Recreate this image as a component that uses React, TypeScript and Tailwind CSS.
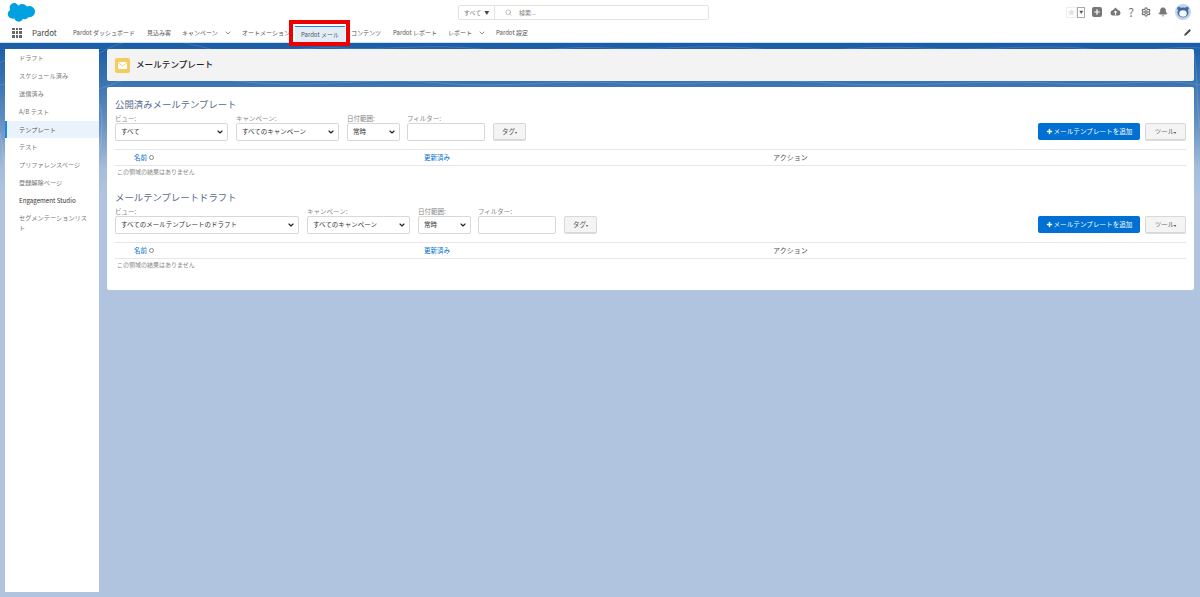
import { ChevronDown, Search, Star, Plus, Settings, Bell, Pencil } from "lucide-react";

const FONT = "[font-family:'Noto_Sans_CJK_JP','Liberation_Sans',sans-serif]";

const NAV_ITEMS = [
    { label: "Pardot ダッシュボード", width: "w-[74px]" },
    { label: "見込み客", width: "w-[35px]" },
    { label: "キャンペーン", width: "w-[60px]", chevron: true },
    { label: "オートメーション", width: "w-[53px]" },
];

const SIDE_ITEMS = [
    "ドラフト",
    "スケジュール済み",
    "送信済み",
    "A/B テスト",
    "テンプレート",
    "テスト",
    "プリファレンスページ",
    "登録解除ページ",
    "Engagement Studio",
    "セグメンテーションリスト",
];

function SalesforceLogo() {
    return (
        <svg width="28" height="20" viewBox="0 0 28 20">
            <path
                fill="#00a1e0"
                d="M11.300 2.800C12.300 1.600 13.700 1 15.200 1c2 0 3.700 1 4.600 2.600.8-.4 1.700-.6 2.600-.6 3.100 0 5.600 2.500 5.600 5.600s-2.500 5.700-5.600 5.700c-.4 0-.7 0-1.100-.1-.7 1.200-2 2-3.500 2-.6 0-1.200-.1-1.800-.4-.7 1.700-2.400 2.900-4.300 2.900-2 0-3.800-1.300-4.400-3.100-.3.100-.6.100-.9.100C3 15.700.8 13.600.8 11c0-1.700.9-3.300 2.300-4.100-.3-.7-.4-1.400-.4-2.200C2.700 2.100 4.900 0 7.600 0c1.500 0 2.800 1.100 3.700 2.800z"
            />
        </svg>
    );
}

function Avatar() {
    return (
        <svg width="16" height="16" viewBox="0 0 32 32">
            <circle cx="16" cy="16" r="16" fill="#c3d2e6" />
            <circle cx="8" cy="9" r="3.500" fill="#3f6aa3" />
            <circle cx="24" cy="9" r="3.500" fill="#3f6aa3" />
            <ellipse cx="16" cy="17" rx="11" ry="10" fill="#3f6aa3" />
            <ellipse cx="16" cy="19" rx="7.500" ry="6.500" fill="#f4f6fa" />
        </svg>
    );
}

function Select({ text, width }: { text: string; width: string }) {
    return (
        <div className={`flex h-[18px] items-center justify-between rounded-[2px] border border-[#d8d8d8] bg-white pl-[5px] pr-[3px] text-[6.500px] text-[#333333] ${width}`}>
            <span className="whitespace-nowrap">{text}</span>
            <ChevronDown size={8} strokeWidth={3.500} className="text-[#222222]" />
        </div>
    );
}

function Field({ label, children }: { label: string; children: React.ReactNode }) {
    return (
        <div className="flex flex-col">
            <span className="h-[9px] text-[6.500px] leading-[9px] text-[#888888]">{label}</span>
            {children}
        </div>
    );
}

function Section({ title, view, viewWidth }: { title: string; view: string; viewWidth: string }) {
    return (
        <section>
            <h2 className="h-[14px] text-[9.400px] leading-[14px] text-[#54698d]">{title}</h2>
            <div className="mt-[3px] flex items-end">
                <Field label="ビュー:">
                    <Select text={view} width={viewWidth} />
                </Field>
                <div className="ml-[8px]">
                    <Field label="キャンペーン:">
                        <Select text="すべてのキャンペーン" width="w-[103px]" />
                    </Field>
                </div>
                <div className="ml-[8px]">
                    <Field label="日付範囲:">
                        <Select text="常時" width="w-[53px]" />
                    </Field>
                </div>
                <div className="ml-[7px]">
                    <Field label="フィルター:">
                        <div className="h-[18px] w-[78px] rounded-[2px] border border-[#d8d8d8] bg-white" />
                    </Field>
                </div>
                <button className="mb-[1px] ml-[8px] flex h-[17px] w-[33px] items-center justify-center rounded-[2px] border border-[#d8d8d8] bg-[#f4f4f4] text-[6.500px] text-[#555555] shadow-[0_1px_0_#dddddd]">
                    タグ<span className="text-[4px]">▾</span>
                </button>
                <button className="mb-[1px] ml-auto flex h-[17px] w-[102px] items-center justify-center gap-[1px] rounded-[2px] bg-[#0070d2] text-[6.600px] text-white">
                    <Plus size={7} strokeWidth={5} />
                    メールテンプレートを追加
                </button>
                <button className="mb-[1px] ml-[5px] flex h-[17px] w-[41px] items-center justify-center rounded-[2px] border border-[#d8d8d8] bg-[#f4f4f4] text-[6.500px] text-[#666666] shadow-[0_1px_0_#dddddd]">
                    ツール<span className="text-[4px] text-[#333333]">▾</span>
                </button>
            </div>
            <div className="mt-[8px] flex h-[17px] items-center border-y border-[#e6e6e6] text-[6.500px]">
                <span className="ml-[19px] flex w-[290px] items-center gap-[2px] text-[#0070d2]">
                    名前
                    <span className="h-[5px] w-[5px] rounded-full border-[1.500px] border-[#888888]" />
                </span>
                <span className="w-[349px] text-[#0070d2]">更新済み</span>
                <span className="text-[7px] text-[#555555]">アクション</span>
            </div>
            <p className="ml-[2px] mt-[1px] text-[6px] leading-[10px] text-[#888888]">この領域の結果はありません</p>
        </section>
    );
}

export default function App() {
    return (
        <div className={`flex h-[597px] w-[1200px] flex-col overflow-hidden bg-white ${FONT}`}>
            <header className="relative z-10 h-[42px] shrink-0 bg-white">
                <div className="flex h-[22px] items-center">
                    <div className="ml-[7px] mt-[3px] w-[28px]">
                        <SalesforceLogo />
                    </div>
                    <div className="ml-[423px] mt-[2px] flex h-[15px] w-[251px] items-center rounded-[2px] border border-[#e2e2e2] text-[6px] text-[#777777]">
                        <span className="flex h-full w-[36px] items-center justify-center gap-[3px] border-r border-[#e2e2e2]">
                            すべて
                            <span className="text-[5px] text-[#444444]">▼</span>
                        </span>
                        <Search size={7} className="ml-[10px] text-[#999999]" />
                        <span className="ml-[7px]">検索...</span>
                    </div>
                    <div className="ml-auto mr-[9px] mt-[2px] flex items-center text-[#777777]">
                        <span className="flex h-[11px] w-[11px] items-center justify-center border border-[#eeeeee]">
                            <Star size={7} fill="#e3e3e3" stroke="#e3e3e3" />
                        </span>
                        <span className="flex h-[11px] w-[8px] items-center justify-center border border-[#aaaaaa] text-[4px] text-[#555555]">▼</span>
                        <span className="ml-[7px] flex h-[10px] w-[10px] items-center justify-center rounded-[2px] bg-[#777777]">
                            <Plus size={8} strokeWidth={3.500} className="text-white" />
                        </span>
                        <svg className="ml-[8px]" width="11" height="10" viewBox="0 0 22 20">
                            <path fill="#777777" d="M11 1 16 6a6 6 0 0 1 5 6 5 5 0 0 1-4 5H5a5 5 0 0 1-4-5 6 6 0 0 1 5-6z" />
                            <path fill="#ffffff" d="M11 7l4 4h-3v5h-2v-5H7z" />
                        </svg>
                        <span className="ml-[7px] text-[12px] leading-[12px] text-[#777777]">?</span>
                        <Settings size={10} strokeWidth={3} className="ml-[7px]" />
                        <Bell size={10} fill="#777777" className="ml-[7px]" />
                        <span className="ml-[7px]">
                            <Avatar />
                        </span>
                    </div>
                </div>
                <nav className="flex h-[20px] items-center pt-[1px] text-[6px] text-[#555555]">
                    <span className="ml-[12px] grid h-[10px] w-[10px] grid-cols-3 gap-[1px]">
                        {Array.from({ length: 9 }).map((_, i) => (
                            <span key={i} className="bg-[#666666]" />
                        ))}
                    </span>
                    <span className="ml-[10px] w-[41px] text-[8px] text-[#444444]">Pardot</span>
                    {NAV_ITEMS.map((item) => (
                        <span key={item.label} className={`flex items-center overflow-hidden whitespace-nowrap ${item.width}`}>
                            {item.label}
                            {item.chevron && <ChevronDown size={8} className="ml-[6px] mt-[1px] shrink-0" />}
                        </span>
                    ))}
                    <span className="relative flex h-[16px] w-[50px] items-center justify-center self-end border-t border-[#1589ee] bg-[#e3edf8] whitespace-nowrap">
                        Pardot メール
                        <span className="absolute left-[-6px] top-[-7px] h-[26px] w-[61px] border-[4px] border-[#ee0000]" />
                    </span>
                    <span className="ml-[6px] w-[42px] whitespace-nowrap">コンテンツ</span>
                    <span className="w-[55px] whitespace-nowrap">Pardot レポート</span>
                    <span className="flex w-[48px] items-center whitespace-nowrap">
                        レポート
                        <ChevronDown size={8} className="ml-[6px] mt-[1px]" />
                    </span>
                    <span className="whitespace-nowrap">Pardot 設定</span>
                    <Pencil size={7} fill="#444444" className="ml-auto mr-[9px]" />
                </nav>
            </header>
            <div className="relative flex min-h-0 flex-1 gap-[8px] border-t border-[#cfe0f2] bg-[linear-gradient(to_bottom,#1a5ca6_0px,#3a74b2_40px,#5f8cc0_75px,#a5bddb_125px,#b0c4df_155px,#b0c4df_100%)] pb-[5px] pl-[5px] pr-[6px] pt-[6px]">
                {/* faint contour lines of the page banner */}
                <svg className="absolute left-0 top-0" width="1200" height="130" viewBox="0 0 1200 130" fill="none" stroke="#ffffff" strokeOpacity="0.14">
                    <path d="M0 20C30 0 70 30 100 10S170-5 210 6 300 2 340 5 430 0 480 6 560 2 610 5 700 0 760 6 860 1 920 5 1040 0 1090 6 1170 2 1200 5" />
                    <path d="M0 42C40 30 70 60 110 42S200 36 260 40 380 34 440 40 560 36 620 40 760 34 830 40 980 36 1050 40 1160 34 1200 42" />
                    <path d="M99 60C104 75 102 95 99 110" />
                    <path d="M1194 10C1198 30 1196 60 1200 85" />
                    <path d="M0 90C2 100 3 110 5 125" />
                </svg>
                <aside className="relative w-[94px] shrink-0 bg-white">
                    {SIDE_ITEMS.map((item) => (
                        <div
                            key={item}
                            className={`flex min-h-[17.900px] items-center py-[3px] pr-[8px] text-[6.200px] leading-[10px] ${
                                item === "テンプレート"
                                    ? "border-l-[2px] border-[#1589ee] bg-[#eaf2fb] pl-[12px] text-[#555555]"
                                    : item === "Engagement Studio"
                                    ? "pl-[14px] text-[#333333]"
                                    : "pl-[14px] text-[#777777]"
                            }`}
                        >
                            {item}
                        </div>
                    ))}
                </aside>
                <main className="relative flex min-w-0 flex-1 flex-col">
                    <div className="flex h-[32px] items-center rounded-[2px] bg-[#f3f3f3] pl-[8px]">
                        <svg width="15" height="15" viewBox="0 0 15 15">
                            <rect width="15" height="15" rx="2" fill="#f4cd60" />
                            <rect x="3" y="4" width="9" height="7" rx="0.800" fill="#ffffff" />
                            <path d="M3 4.500 7.500 8 12 4.500" fill="none" stroke="#f4cd60" strokeWidth="0.900" />
                        </svg>
                        <h1 className="mb-[2px] ml-[6px] text-[8.600px] font-medium text-[#222222]">メールテンプレート</h1>
                    </div>
                    <div className="mt-[6px] flex h-[203px] flex-col gap-[13px] rounded-[2px] bg-white px-[8px] pt-[10px]">
                        <Section title="公開済みメールテンプレート" view="すべて" viewWidth="w-[113px]" />
                        <Section title="メールテンプレートドラフト" view="すべてのメールテンプレートのドラフト" viewWidth="w-[184px]" />
                    </div>
                </main>
            </div>
        </div>
    );
}
